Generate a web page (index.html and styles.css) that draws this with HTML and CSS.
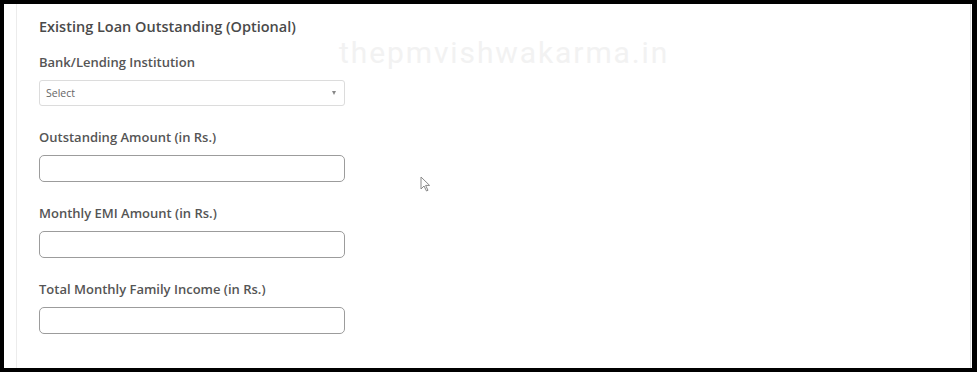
FILE: index.html
```html
<!DOCTYPE html>
<html lang="en">
<head>
<meta charset="utf-8">
<title>Existing Loan Outstanding</title>
<link rel="stylesheet" href="styles.css">
</head>
<body>
<div class="frame">
  <div class="card">
    <h3 class="section-title">Existing Loan Outstanding (Optional)</h3>
    <div class="field">
      <label class="label">Bank/Lending Institution</label>
      <div class="select"><span class="select-text">Select</span><span class="caret"></span></div>
    </div>
    <div class="field">
      <label class="label">Outstanding Amount (in Rs.)</label>
      <div class="input"></div>
    </div>
    <div class="field">
      <label class="label">Monthly EMI Amount (in Rs.)</label>
      <div class="input"></div>
    </div>
    <div class="field">
      <label class="label">Total Monthly Family Income (in Rs.)</label>
      <div class="input"></div>
    </div>
  </div>
  <div class="watermark">thepmvishwakarma.in</div>
  <svg class="pointer" width="11" height="16" viewBox="0 0 11 16"><path d="M1 1 L1 13 L4 10 L6.5 15 L8 14.3 L5.6 9.4 L9.6 9.4 Z" fill="#fff" stroke="#8a8a8a" stroke-width="1" stroke-linejoin="round"/></svg>
</div>
</body>
</html>
```
FILE: styles.css
```css
html, body {
  margin: 0;
  padding: 0;
  background: #000;
}
body {
  width: 977px;
  height: 372px;
  overflow: hidden;
}
.frame {
  position: relative;
  margin: 4px 5px 0 4px;
  height: 364px;
  background: #fff;
  overflow: hidden;
}
.card {
  margin-left: 12px;
  margin-right: 1px;
  height: 100%;
  border-left: 1px solid #ececec;
  border-right: 1px solid #e2e2e2;
  padding: 13px 0 0 22px;
  box-sizing: border-box;
  font-family: "Open Sans", "Noto Sans", sans-serif;
}
.section-title {
  margin: 0 0 16px 0;
  font-size: 14.5px;
  line-height: 20px;
  font-weight: 600;
  color: #4a4a4a;
}
.field {
  width: 306px;
  margin-bottom: 22px;
}
.label {
  display: block;
  font-size: 13px;
  line-height: 18px;
  font-weight: 600;
  color: #555;
  margin-bottom: 9px;
}
.select {
  height: 26px;
  box-sizing: border-box;
  border: 1px solid #dcdcdc;
  border-radius: 3px;
  display: flex;
  align-items: center;
  justify-content: space-between;
  padding: 0 8px 0 6px;
}
.select-text {
  font-size: 10.5px;
  color: #666;
}
.caret {
  width: 0;
  height: 0;
  border-left: 2.5px solid transparent;
  border-right: 2.5px solid transparent;
  border-top: 4px solid #888;
}
.input {
  height: 27px;
  box-sizing: border-box;
  border: 1px solid #9c9c9c;
  border-radius: 5px;
}
.watermark {
  position: absolute;
  left: 335px;
  top: 29px;
  font-family: Roboto, sans-serif;
  font-size: 30px;
  line-height: 40px;
  color: #f2f2f2;
  letter-spacing: 1.9px;
}
.pointer {
  position: absolute;
  left: 416px;
  top: 172px;
}
```
